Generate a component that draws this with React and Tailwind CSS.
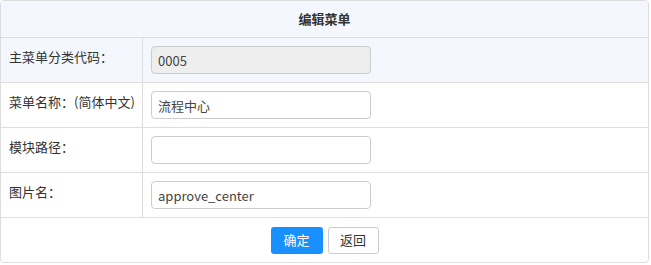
import React from 'react';

const font = { fontFamily: '"Noto Sans CJK SC", "Noto Sans", sans-serif' };

function Row({ label, value, disabled, shaded }) {
  return (
    <div className={`flex h-[45px] border-b border-[#dddddd] ${shaded ? 'bg-[#f4f8fe]' : 'bg-white'}`}>
      <div className="w-[142px] shrink-0 border-r border-[#dddddd] pl-[8px] pt-[9px] text-[13px] leading-[20px] text-[#333]">
        {label}
      </div>
      <div className="pl-[8px] pt-[8px]">
        <input
          readOnly
          value={value}
          disabled={disabled}
          className={`h-[28px] w-[220px] rounded-[4px] border border-[#cccccc] px-[6px] text-[13px] text-[#444] outline-none ${disabled ? 'bg-[#eeeeee]' : 'bg-white'}`}
          style={font}
        />
      </div>
    </div>
  );
}

export default function App() {
  return (
    <div className="h-[265px] w-[651px] bg-white" style={font}>
      <div className="w-[649px] overflow-hidden rounded-[4px] border border-[#dddddd]">
        <div className="flex h-[37px] items-center justify-center border-b border-[#dddddd] bg-[#f4f8fe] text-[13px] font-bold text-[#333]">
          编辑菜单
        </div>
        <Row label="主菜单分类代码：" value="0005" disabled shaded />
        <Row label="菜单名称：(简体中文)" value="流程中心" />
        <Row label="模块路径：" value="" />
        <Row label="图片名：" value="approve_center" />
        <div className="flex h-[44px] items-center justify-center gap-[5px]">
          <button className="h-[27px] w-[52px] rounded-[3px] bg-[#1890ff] text-[13px] text-white">确定</button>
          <button className="h-[27px] w-[51px] rounded-[3px] border border-[#cccccc] bg-white text-[13px] text-[#333]">返回</button>
        </div>
      </div>
    </div>
  );
}
